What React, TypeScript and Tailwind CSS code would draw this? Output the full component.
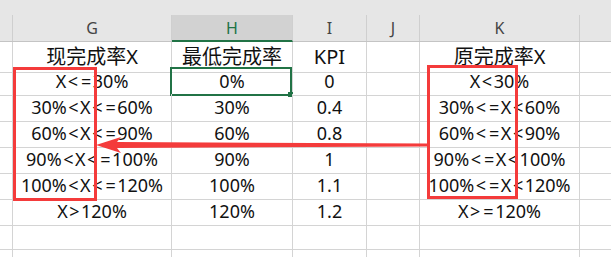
import React from "react";

const rows: string[][] = [
  ["现完成率X", "最低完成率", "KPI", "", "原完成率X"],
  ["X<=30%", "0%", "0", "", "X<30%"],
  ["30%<X<=60%", "30%", "0.4", "", "30%<=X<60%"],
  ["60%<X<=90%", "60%", "0.8", "", "60%<=X<90%"],
  ["90%<X<=100%", "90%", "1", "", "90%<=X<100%"],
  ["100%<X<=120%", "100%", "1.1", "", "100%<=X<120%"],
  ["X>120%", "120%", "1.2", "", "X>=120%"],
  ["", "", "", "", ""],
  ["", "", "", "", ""],
];

const letters = ["G", "H", "I", "J", "K"];

// the sheet font draws < = > wider than Noto Sans does
function CellText({ text }: { text: string }) {
  return (
    <>
      {text.split("").map((ch, i) =>
        "<=>".includes(ch) ? (
          <span key={i} className="mx-[1.5px]">
            {ch}
          </span>
        ) : (
          <span key={i}>{ch}</span>
        )
      )}
    </>
  );
}

export default function App() {
  return (
    <div
      className="relative w-[611px] h-[257px] overflow-hidden bg-white text-[#111]"
      style={{ fontFamily: '"Noto Sans", "Noto Sans CJK SC", sans-serif' }}
    >
      {/* column header */}
      <div className="bg-[#e6e6e6]">
        <div className="h-[15px]" />
        <div className="grid grid-cols-[13px_159px_121px_74px_53px_160px_1fr] h-[27px] border-b border-[#c4c4c4]">
          <div className="border-r border-[#cfcfcf]" />
          {letters.map((l) => (
            <div
              key={l}
              className={
                l === "H"
                  ? "flex items-center justify-center border-r border-[#cfcfcf] bg-[#d2d2d2] border-b-2 border-b-[#217346] -mb-px text-[16px] text-[#217346]"
                  : "flex items-center justify-center border-r border-[#cfcfcf] text-[16px] text-[#444]"
              }
            >
              {l}
            </div>
          ))}
          <div />
        </div>
      </div>

      {/* cells */}
      {rows.map((r, ri) => (
        <div
          key={ri}
          className="grid grid-cols-[13px_159px_121px_74px_53px_160px_1fr] h-[26px]"
        >
          <div className="border-r border-b border-[#d4d4d4]" />
          {r.map((c, ci) => (
            <div
              key={ci}
              className={
                ri === 0
                  ? "relative flex items-center justify-center whitespace-nowrap border-r border-b border-[#d4d4d4] text-[20px]"
                  : "relative flex items-center justify-center whitespace-nowrap border-r border-b border-[#d4d4d4] text-[18px]"
              }
            >
              <CellText text={c} />
              {ri === 1 && ci === 1 && (
                <div className="absolute -left-[2px] -top-[1px] right-0 -bottom-[1px] border-2 border-[#217346]">
                  <div className="absolute -right-[3px] -bottom-[3px] w-[5px] h-[5px] bg-[#217346]" />
                </div>
              )}
            </div>
          ))}
          <div className="border-b border-[#d4d4d4]" />
        </div>
      ))}

      {/* annotations */}
      <div className="absolute left-[13px] top-[67px] w-[84px] h-[134px] border-[3px] border-[#f43b3b]" />
      <div className="absolute left-[427px] top-[65px] w-[91px] h-[134px] border-[3px] border-[#f43b3b]" />
      <svg className="absolute left-0 top-0" width="611" height="257">
        <polygon
          points="96,145 121,137 117,142 428,143.5 428,146.5 117,148 121,153"
          fill="#f43b3b"
        />
      </svg>
    </div>
  );
}
